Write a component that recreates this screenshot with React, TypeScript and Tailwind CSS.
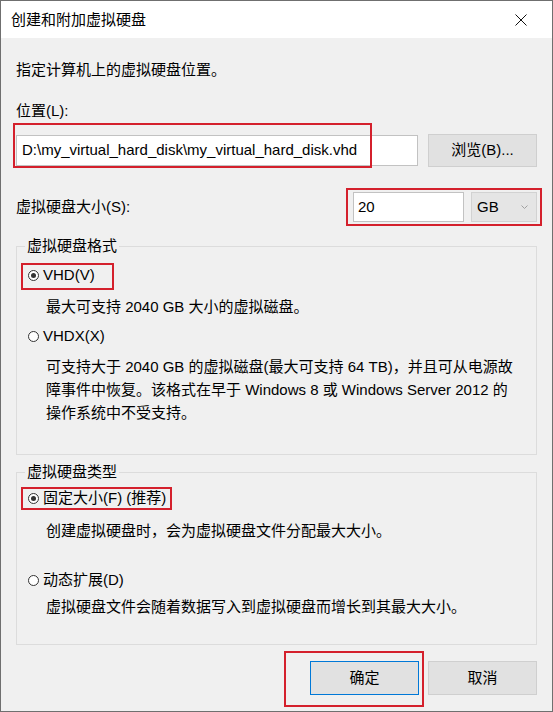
import React from "react";

// 单选按钮圆点
function RadioDot({ checked }: { checked: boolean }) {
  return (
    <span className="w-[11px] h-[11px] rounded-full border border-[#333333] bg-white flex items-center justify-center shrink-0">
      {checked && <span className="w-[5px] h-[5px] rounded-full bg-[#333333]" />}
    </span>
  );
}

function RadioRow({ checked, label }: { checked: boolean; label: string }) {
  return (
    <div className="flex items-center gap-[4px] pl-[11px] h-[20px] leading-[20px]">
      <RadioDot checked={checked} />
      <span>{label}</span>
    </div>
  );
}

export default function App() {
  return (
    <div className="relative w-[553px] h-[712px] overflow-hidden font-['Liberation_Sans','Noto_Sans_CJK_SC',sans-serif] text-[15px] text-black">
      <div className="w-full h-full flex flex-col border border-[#6f6f6f] bg-[#f0f0f0]">
        {/* 标题栏 */}
        <div className="h-[37px] shrink-0 bg-white flex items-center justify-between pl-[10px] pr-[25px]">
          <span className="leading-[20px]">创建和附加虚拟硬盘</span>
          <svg width="12" height="12" viewBox="0 0 12 12" className="mt-[1px]">
            <path d="M0.5 0.5 L11.5 11.5 M11.5 0.5 L0.5 11.5" stroke="#111" strokeWidth="1" />
          </svg>
        </div>

        <div className="flex flex-col px-[15px]">
          <div className="mt-[22px] leading-[20px]">指定计算机上的虚拟硬盘位置。</div>

          <div className="mt-[21px] leading-[20px]">位置(L):</div>

          <div className="mt-[12px] h-[34px] flex items-center gap-[10px]">
            <div className="w-[402px] h-[31px] bg-white border border-[#c2c2c2] flex items-center pl-[5px] leading-[20px] whitespace-nowrap">
              D:\my_virtual_hard_disk\my_virtual_hard_disk.vhd
            </div>
            <button className="w-[109px] h-[33px] bg-[#e1e1e1] border border-[#cfcfcf] flex items-center justify-center leading-[20px]">
              浏览(B)...
            </button>
          </div>

          <div className="mt-[24px] h-[32px] flex items-center justify-between">
            <span className="leading-[20px]">虚拟硬盘大小(S):</span>
            <div className="flex items-center gap-[7px]">
              <div className="w-[111px] h-[30px] bg-white border border-[#c2c2c2] flex items-center pl-[4px] leading-[20px]">
                20
              </div>
              <div className="w-[66px] h-[30px] bg-[#e5e5e5] border border-[#d2d2d2] flex items-center justify-between pl-[5px] pr-[8px] leading-[20px]">
                <span>GB</span>
                <svg width="7" height="4" viewBox="0 0 7 4">
                  <path d="M0.5 0.5 L3.5 3.5 L6.5 0.5" stroke="#a0a0a0" fill="none" strokeWidth="1" />
                </svg>
              </div>
            </div>
          </div>

          {/* 虚拟硬盘格式 */}
          <fieldset className="mt-[13px] border border-[#dcdcdc] pb-[30px]">
            <legend className="ml-[8px] px-[2px] leading-[20px]">虚拟硬盘格式</legend>
            <div className="mt-[9px]">
              <RadioRow checked label="VHD(V)" />
            </div>
            <div className="mt-[12px] pl-[29px] leading-[20px]">最大可支持 2040 GB 大小的虚拟磁盘。</div>
            <div className="mt-[9px]">
              <RadioRow checked={false} label="VHDX(X)" />
            </div>
            <div className="mt-[9px] pl-[29px] leading-[23px] whitespace-nowrap">
              可支持大于 2040 GB 的虚拟磁盘(最大可支持 64 TB)，并且可从电源故
              <br />
              障事件中恢复。该格式在早于 Windows 8 或 Windows Server 2012 的
              <br />
              操作系统中不受支持。
            </div>
          </fieldset>

          {/* 虚拟硬盘类型 */}
          <fieldset className="mt-[7px] border border-[#dcdcdc] pb-[27px]">
            <legend className="ml-[8px] px-[2px] leading-[20px]">虚拟硬盘类型</legend>
            <div className="mt-[6px]">
              <RadioRow checked label="固定大小(F) (推荐)" />
            </div>
            <div className="mt-[13px] pl-[29px] leading-[20px]">创建虚拟硬盘时，会为虚拟硬盘文件分配最大大小。</div>
            <div className="mt-[29px]">
              <RadioRow checked={false} label="动态扩展(D)" />
            </div>
            <div className="mt-[7px] pl-[29px] leading-[20px]">虚拟硬盘文件会随着数据写入到虚拟硬盘而增长到其最大大小。</div>
          </fieldset>

          <div className="mt-[16px] flex justify-end gap-[9px]">
            <button className="w-[109px] h-[34px] bg-[#e1e1e1] border border-[#0078d7] flex items-center justify-center leading-[20px]">
              确定
            </button>
            <button className="w-[109px] h-[34px] bg-[#e1e1e1] border border-[#cfcfcf] flex items-center justify-center leading-[20px]">
              取消
            </button>
          </div>
        </div>
      </div>

      {/* 红色标注框 */}
      <div className="absolute left-[13px] top-[123px] w-[359px] h-[45px] border-2 border-[#d4202c]" />
      <div className="absolute left-[346px] top-[188px] w-[196px] h-[38px] border-2 border-[#d4202c]" />
      <div className="absolute left-[21px] top-[263px] w-[93px] h-[27px] border-2 border-[#d4202c]" />
      <div className="absolute left-[21px] top-[487px] w-[151px] h-[23px] border-2 border-[#d4202c]" />
      <div className="absolute left-[284px] top-[651px] w-[140px] h-[56px] border-2 border-[#d4202c]" />
    </div>
  );
}
